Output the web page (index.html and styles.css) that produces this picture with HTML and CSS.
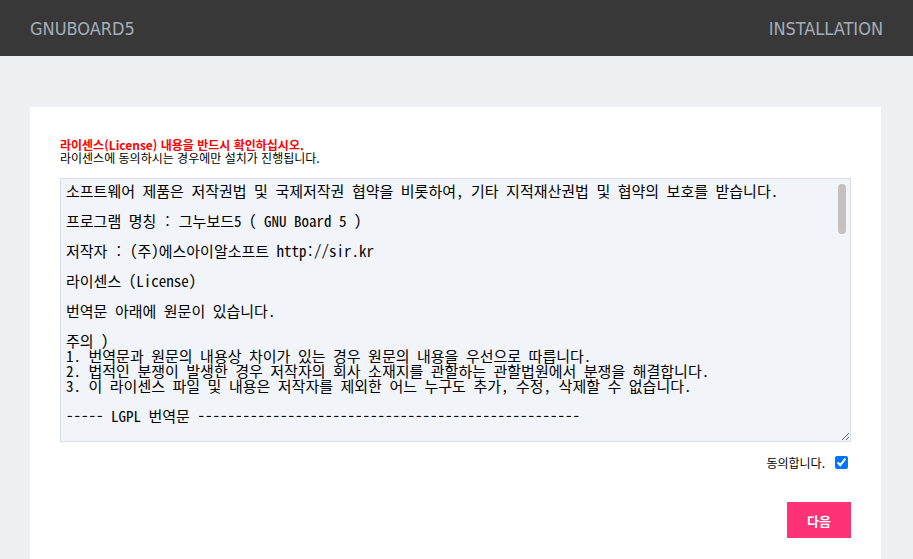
FILE: index.html
```html
<!DOCTYPE html>
<html lang="ko">
  <head>
    <meta charset="utf-8" />
    <meta name="viewport" content="width=device-width, initial-scale=1.0">
    <title>그누보드5 설치</title>
    <link rel="stylesheet" href="styles.css">
  </head>

  <body>
    <div class="top">
      <h1>GNUBOARD5</h1>
      <span class="step">INSTALLATION</span>
    </div>

    <div class="wrap">
      <form class="box">
        <p class="warn">라이센스(License) 내용을 반드시 확인하십시오.</p>
        <p class="notice">라이센스에 동의하시는 경우에만 설치가 진행됩니다.</p>

        <div class="license_wrap">
<textarea class="license" readonly>소프트웨어 제품은 저작권법 및 국제저작권 협약을 비롯하여, 기타 지적재산권법 및 협약의 보호를 받습니다.

프로그램 명칭 : 그누보드5 ( GNU Board 5 )

저작자 : (주)에스아이알소프트 http://sir.kr

라이센스 (License)

번역문 아래에 원문이 있습니다.

주의 )
1. 번역문과 원문의 내용상 차이가 있는 경우 원문의 내용을 우선으로 따릅니다.
2. 법적인 분쟁이 발생한 경우 저작자의 회사 소재지를 관할하는 관할법원에서 분쟁을 해결합니다.
3. 이 라이센스 파일 및 내용은 저작자를 제외한 어느 누구도 추가, 수정, 삭제할 수 없습니다.

----- LGPL 번역문 ---------------------------------------------------


GNU 약소 일반 공중 사용 허가서

2.1판, 1999년 2월

Copyright (C) 1991, 1999 Free Software Foundation, Inc.
51 Franklin Street, Fifth Floor, Boston, MA 02110-1301 USA

누구든지 본 사용 허가서를 있는 그대로 복제하고 배포할 수 있습니다.
그러나 본문에 대한 변경은 허용되지 않습니다.

전 문

소프트웨어에 적용되는 대부분의 사용 허가서(license)들은 소프트웨어에 대한
수정과 공유의 자유를 제한하려는 것을 그 목적으로 합니다. 그러나 GNU 일반
공중 사용 허가서는 자유 소프트웨어에 대한 수정과 공유의 자유를 모든 사용자들에게
보장하기 위해서 만들어졌습니다.

본 사용 허가서인 GNU 약소 일반 공중 사용 허가서는 자유 소프트웨어 재단과
다른 저작자들에 의해서 특별하게 설계된 소프트웨어 패키지에 적용됩니다.

우리가 자유 소프트웨어라고 이야기할 때의 자유는 사용상의 자유를 의미하는
것이지 가격을 말하는 것이 아닙니다.

사용자들의 권리를 보호하기 위해서 우리는 배포자가 사용자들의 권리를 거부하거나
권리를 포기하도록 요구하는 것을 금지하는 제한을 두고 있습니다.

예를 들어, 라이브러리의 복제물을 배포하는 사람은 유료이든 무료이든 상관없이
자신이 가진 모든 권리를 수령자에게 그대로 주어야 합니다.

우리는 다음과 같은 두 가지 단계를 통해서 사용자들의 권리를 보호합니다.
(1) 라이브러리에 저작권을 설정합니다.
(2) 사용자들에게 라이브러리의 복제와 배포, 그리고 수정에 대한 법적인 허가를
    부여하는 본 사용 허가서를 제공합니다.

또한, 배포자를 보호하기 위해서 자유 라이브러리에 대해서는 어떠한 보증도
제공되지 않는다는 점을 분명히 하고자 합니다.

마지막으로, 소프트웨어 특허는 자유 프로그램의 존재를 끊임없이 위협하고
있습니다.

복제와 배포 그리고 수정에 관한 조건과 규정

제 0 조.
본 허가서는 저작권자나 그 밖의 권한을 가진 자가 본 약소 일반 공중 사용
허가서에 따라 배포될 수 있음을 명시한 소프트웨어 라이브러리와 그 밖의
저작물에 적용됩니다.

제 1 조.
본 허가서의 모든 조항이 준수된다는 조건하에서 라이브러리의 완전한 소스
코드를 어떠한 매체를 통해서도 복제하고 배포할 수 있습니다.

제 2 조.
라이브러리나 그 일부를 수정하여 2차적 저작물을 만들 수 있으며, 그러한
수정 사항을 복제하고 배포할 수 있습니다.

제 3 조.
특정 복제물에 대해서는 본 허가서 대신 GNU 일반 공중 사용 허가서의 조항을
적용할 수 있습니다.

제 4 조.
라이브러리나 그 일부를 목적 코드나 실행물의 형태로 복제하고 배포할 수
있습니다.
</textarea>
          <span class="scroll_thumb"></span>
        </div>

        <div class="agree">
          <label for="agree">동의합니다.</label>
          <input type="checkbox" id="agree" name="agree" checked>
        </div>

        <div class="btn_confirm">
          <button type="button" class="btn_submit">다음</button>
        </div>
      </form>
    </div>
  </body>
</html>
```

FILE: styles.css
```css
html, body {
  height: 100%;
}

body {
  margin: 0;
  background: #eef1f4;
  font-family: "Noto Sans CJK KR", "Liberation Sans", sans-serif;
  font-size: 12px;
  color: #000;
  overflow: hidden;
}

.top {
  height: 56px;
  padding: 0 30px;
  background: #383838;
  display: flex;
  align-items: center;
  justify-content: space-between;
}

.top h1, .top .step {
  margin: 0;
  font-family: "DejaVu Sans Condensed", "DejaVu Sans", sans-serif;
  font-stretch: condensed;
  font-weight: normal;
  font-size: 18px;
  color: #a5aeb8;
}

.wrap {
  padding: 51px 32px 0 30px;
  height: 100%;
  box-sizing: border-box;
}

.box {
  background: #fff;
  padding: 31px 30px 30px;
  min-height: 500px;
}

.box p {
  margin: 0;
  line-height: 13px;
}

.warn {
  color: #ff0000;
  font-weight: bold;
}

/* textarea + fake scrollbar thumb */
.license_wrap {
  position: relative;
  margin-top: 14px;
}

.license {
  display: block;
  width: 100%;
  height: 264px;
  box-sizing: border-box;
  padding: 4px 5px 5px;
  border: 1px solid #d9dee5;
  background: #f1f4f9;
  color: #000;
  font-family: "Noto Sans Mono CJK KR", "Liberation Mono", "Noto Sans CJK KR", monospace;
  font-size: 15px;
  line-height: 15px;
  overflow-y: scroll;
}

.license::-webkit-scrollbar {
  width: 16px;
}

.license::-webkit-scrollbar-thumb {
  background: transparent;
}

.scroll_thumb {
  position: absolute;
  top: 6px;
  right: 5px;
  width: 8px;
  height: 50px;
  border-radius: 4px;
  background: #c1c1c1;
}

.agree {
  display: flex;
  justify-content: flex-end;
  align-items: center;
  margin-top: 10px;
  height: 20px;
}

.agree label {
  margin-right: 6px;
}

.agree input {
  margin: 3px 3px 3px 4px;
}

.btn_confirm {
  display: flex;
  justify-content: flex-end;
  margin-top: 30px;
}

.btn_submit {
  width: 64px;
  height: 36px;
  border: 0;
  background: #ff3278;
  color: #fff;
  font-family: "Noto Sans CJK KR", sans-serif;
  font-size: 13px;
  font-weight: bold;
  cursor: pointer;
}
```
